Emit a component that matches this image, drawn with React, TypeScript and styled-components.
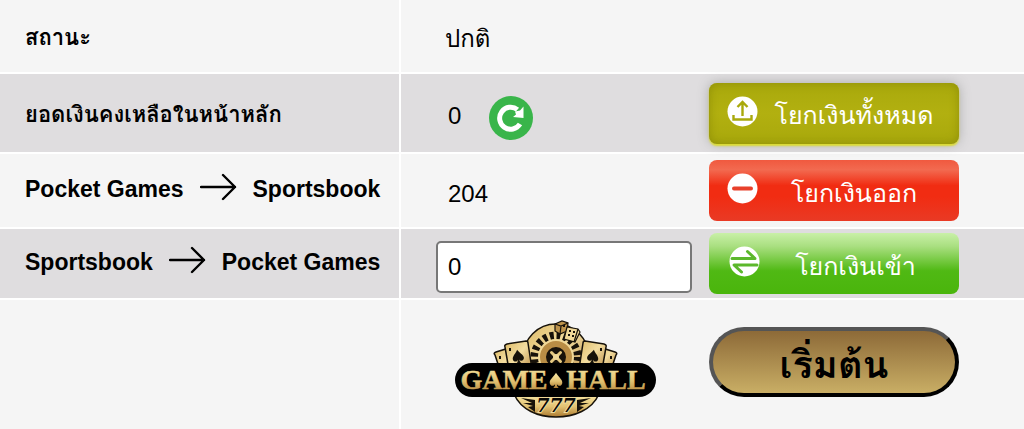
import React, { useState } from "react";
import styled, { createGlobalStyle, css } from "styled-components";

const thai = `"Thonburi", "Loma", "Noto Sans Thai Looped", "Waree", "Garuda", "Noto Sans Thai"`;

const GlobalStyle = createGlobalStyle`
  body {
    margin: 0;
    background: #f5f5f5;
    color: #000;
    font-family: "Liberation Sans", ${thai}, "Noto Sans", sans-serif;
  }
`;

const TransferTable = styled.table`
  width: 100%;
  table-layout: fixed;
  border-collapse: collapse;
`;

const Row = styled.tr<{ $height: number; $shaded?: boolean }>`
  height: ${(p) => p.$height}px;
  background: ${(p) => (p.$shaded ? "#dfdddf" : "#f5f5f5")};
  border-bottom: 2px solid #fff;
  &:last-child {
    border-bottom: 0;
  }
`;

const Label = styled.th`
  width: 400px;
  box-sizing: border-box;
  padding: 4px 0 0 25px;
  border-right: 2px solid #fff;
  text-align: left;
  font-size: 22px;
  line-height: 32px;
  white-space: nowrap;
`;

const Cell = styled.td`
  padding: 0 0 0 35px;
`;

const Line = styled.div`
  display: flex;
  align-items: center;
  gap: 17px;
`;

const Direction = styled.span`
  display: flex;
  align-items: center;
  gap: 16px;
  padding-bottom: 8px;
  font-size: 23px;

  svg {
    margin-bottom: 4px;
  }
`;

const Value = styled.span<{ $inset?: number }>`
  box-sizing: border-box;
  flex: 0 1 256px;
  display: flex;
  align-items: center;
  gap: 28px;
  padding-top: 6px;
  padding-left: ${(p) => p.$inset ?? 12}px;
  font-size: 24px;
  line-height: 32px;
`;

const StartLine = styled(Line)`
  padding-bottom: 6px;
`;

const LogoBox = styled(Value)`
  padding-top: 16px;
  padding-left: 18px;
`;

const AmountInput = styled.input`
  box-sizing: border-box;
  flex: 0 1 256px;
  min-width: 0;
  height: 52px;
  margin: 6px 0 0;
  padding: 0 10px;
  border: 2px solid #777;
  border-radius: 5px;
  background: #fff;
  color: #000;
  font: 24px/32px "Liberation Sans", sans-serif;
`;

const RefreshButton = styled.button`
  display: block;
  width: 44px;
  height: 44px;
  margin: 4px 0 0;
  padding: 0;
  border: 0;
  border-radius: 50%;
  background: #39b54a;
  cursor: pointer;
`;

const tones = {
  all: css`
    background: linear-gradient(#a9a90c, #b2b010 50%, #a8a80c);
    box-shadow: 0 2px 2px #dcdc32, 0 0 12px #aaa, inset 0 0 10px #8f8f08;
  `,
  out: css`
    background: linear-gradient(#f0593f, #f26a50 16%, #f12c12 42%, #f12c12 60%, #e93a25);
  `,
  in: css`
    background: linear-gradient(#c9f0a8, #a9df80 22%, #50b914 62%, #4ab50c);
  `,
};

const ActionButton = styled.button<{ $tone: keyof typeof tones }>`
  box-sizing: border-box;
  flex: 0 0 250px;
  display: flex;
  align-items: center;
  height: 61px;
  padding: 0 9px 0 18px;
  border: 0;
  border-radius: 8px;
  color: #fff;
  font: 25px/40px "Liberation Sans", ${thai}, sans-serif;
  white-space: nowrap;
  cursor: pointer;
  ${(p) => tones[p.$tone]}

  svg {
    flex: none;
    margin-bottom: 4px;
  }
`;

const ActionText = styled.span`
  flex: 1;
  padding-top: 4px;
  text-align: center;
`;

const StartButton = styled.button`
  box-sizing: border-box;
  flex: 0 0 250px;
  height: 70px;
  padding: 6px 0 0;
  border: 4px solid #000;
  border-color: #555 #000 #000 #555;
  border-radius: 35px;
  background: linear-gradient(#8d6a38, #c9ae65);
  color: #000;
  font: bold 38px/48px "Liberation Sans", ${thai}, sans-serif;
  cursor: pointer;
`;

const ArrowIcon = () => (
  <svg width="37" height="28" viewBox="0 0 37 28" fill="none" stroke="#000" strokeWidth="2.400" strokeLinecap="round" strokeLinejoin="round" aria-hidden="true">
    <path d="M1 14H35M23 2L35 14L23 26" />
  </svg>
);

const RefreshIcon = () => (
  <svg width="44" height="44" viewBox="0 0 44 44" aria-hidden="true">
    <path d="M31 28A11 11 0 1 1 28.500 13.600" fill="none" stroke="#fff" strokeWidth="5" />
    <path d="M34.500 10.500L34.500 22L24 21L27 18.500L26 15.500L31 14.500Z" fill="#fff" />
  </svg>
);

const UploadIcon = () => (
  <svg width="31" height="31" viewBox="0 0 31 31" aria-hidden="true">
    <circle cx="15.500" cy="15.500" r="15" fill="#fff" />
    <path d="M15.500 20V6M10.500 11L15.500 6L20.500 11M6.500 19V23.500H24.500V19" fill="none" stroke="#a9a90c" strokeWidth="2.400" />
  </svg>
);

const MinusIcon = () => (
  <svg width="31" height="31" viewBox="0 0 31 31" aria-hidden="true">
    <circle cx="15.500" cy="15.500" r="15" fill="#fff" />
    <path d="M7 15.500H24" stroke="#e8402b" strokeWidth="4" strokeLinecap="round" />
  </svg>
);

const SwapIcon = () => (
  <svg width="34" height="31" viewBox="0 0 34 31" aria-hidden="true">
    <circle cx="17.500" cy="15.500" r="15" fill="#fff" />
    <path d="M5 12.500H28L20.500 5.500M30 19H7L14.500 26" fill="none" stroke="#5cb82c" strokeWidth="3" strokeLinecap="round" strokeLinejoin="round" />
  </svg>
);

const SPADE = "M0 -8C-2 -4 -7 -1 -7 3C-7 7 -2 7.500 -1 4.500C-1 7 -2 8 -3 9H3C2 8 1 7 1 4.500C2 7.500 7 7 7 3C7 -1 2 -4 0 -8Z";

const GameHallLogo = () => (
  <svg width="203" height="100" viewBox="0 0 203 100" role="img" aria-label="Game Hall 777">
    <defs>
      <linearGradient id="gold" x1="0" y1="0" x2="0" y2="1">
        <stop offset="0" stopColor="#fae9a8" />
        <stop offset="0.550" stopColor="#e2c272" />
        <stop offset="1" stopColor="#ab7930" />
      </linearGradient>
      <linearGradient id="card" x1="0" y1="0" x2="1" y2="1">
        <stop offset="0" stopColor="#dcb965" />
        <stop offset="0.450" stopColor="#f3dda0" />
        <stop offset="1" stopColor="#a97730" />
      </linearGradient>
    </defs>
    {/* roulette wheel */}
    <circle cx="102" cy="37" r="33" fill="url(#card)" stroke="#17120a" strokeWidth="1.500" />
    <circle cx="102" cy="37" r="21.500" fill="none" stroke="#17120a" strokeWidth="8" strokeDasharray="3.900 2.850" />
    <circle cx="102" cy="37" r="18" fill="#f0d898" />
    <circle cx="102" cy="37" r="13" fill="#17120a" stroke="#b98d45" strokeWidth="6" />
    <path d="M97.500 32.500L106.500 41.500M106.500 32.500L97.500 41.500" stroke="#e5c980" strokeWidth="3" strokeLinecap="round" />
    <circle cx="102" cy="37" r="3" fill="#f0d898" />
    {/* cards */}
    <g stroke="#17120a" strokeWidth="1.500" fill="url(#card)">
      <path d="M41 35Q39 33 42 32L55 28L65 56H48Z" />
      <path d="M51 27Q50 25 53 24L72 21Q74 21 74 23L79 56H56Z" />
      <path d="M162 35Q164 33 161 32L148 28L138 56H155Z" />
      <path d="M152 27Q153 25 150 24L131 21Q129 21 129 23L124 56H147Z" />
    </g>
    <g fill="#17120a">
      <path d={SPADE} transform="translate(64 36) rotate(-8)scale(.8)" />
      <path d={SPADE} transform="translate(139 36) rotate(8)scale(.8)" />
      <path d="M55 28h2v3h-2zM45 36h2v3h-2zM146 28h2v3h-2zM156 36h2v3h-2z" />
    </g>
    {/* dice */}
    <g stroke="#17120a" strokeWidth="1.200">
      <path d="M101 4L108 1L114 3L113 11L106 14L101 11Z" fill="#bd934b" />
      <path d="M101 4L107 6L114 3M107 6L106 14" fill="none" />
      <path d="M113 7L124 9L126 12L121 22L110 19Z" fill="#f0d898" />
      <path d="M124 9L120 22" fill="none" />
    </g>
    <path d="M115 10h2v2h-2zM119 11h2v2h-2zM114 14h2v2h-2zM118 15h2v2h-2zM109 5h2v2h-2z" fill="#17120a" />
    {/* lower medallion */}
    <path d="M60 74H145C138 90 120 97 102 97S67 90 60 74Z" fill="url(#gold)" stroke="#17120a" strokeWidth="1.500" />
    <path d="M67 78L81 80L81 92L74 87L79 86L69 83L78 83ZM137 78L123 80L123 92L130 87L125 86L135 83L126 83Z" fill="#17120a" />
    <text x="102" y="92" textAnchor="middle" fill="#080705" stroke="#f0d898" strokeWidth="2" paintOrder="stroke" fontFamily="DejaVu Serif, serif" fontWeight="bold" fontStyle="italic" fontSize="19">777</text>
    {/* name plate */}
    <rect x="1" y="43" width="201" height="34" rx="17" fill="#000" />
    <g fill="url(#gold)" stroke="url(#gold)" strokeWidth="0.500" fontFamily="Liberation Serif, serif" fontWeight="bold" fontSize="28">
      <text x="50" y="69" textAnchor="middle">GAME</text>
      <text x="152" y="69" textAnchor="middle">HALL</text>
    </g>
    <path d={SPADE} transform="translate(102 60)scale(.9)" fill="url(#gold)" />
  </svg>
);

export default function App() {
  const [amount, setAmount] = useState("0");
  return (
    <>
      <GlobalStyle />
      <TransferTable>
        <tbody>
          <Row $height={73}>
            <Label scope="row">สถานะ</Label>
            <Cell>
              <Value $inset={9}>ปกติ</Value>
            </Cell>
          </Row>
          <Row $height={80} $shaded>
            <Label scope="row">ยอดเงินคงเหลือในหน้าหลัก</Label>
            <Cell>
              <Line>
                <Value>
                  0
                  <RefreshButton type="button" aria-label="รีเฟรช">
                    <RefreshIcon />
                  </RefreshButton>
                </Value>
                <ActionButton type="button" $tone="all">
                  <UploadIcon />
                  <ActionText>โยกเงินทั้งหมด</ActionText>
                </ActionButton>
              </Line>
            </Cell>
          </Row>
          <Row $height={75}>
            <Label scope="row">
              <Direction>
                Pocket Games
                <ArrowIcon />
                Sportsbook
              </Direction>
            </Label>
            <Cell>
              <Line>
                <Value>204</Value>
                <ActionButton type="button" $tone="out">
                  <MinusIcon />
                  <ActionText>โยกเงินออก</ActionText>
                </ActionButton>
              </Line>
            </Cell>
          </Row>
          <Row $height={71} $shaded>
            <Label scope="row">
              <Direction as="label" htmlFor="amount">
                Sportsbook
                <ArrowIcon />
                Pocket Games
              </Direction>
            </Label>
            <Cell>
              <Line>
                <AmountInput id="amount" inputMode="numeric" value={amount} onChange={(e) => setAmount(e.target.value)} />
                <ActionButton type="button" $tone="in">
                  <SwapIcon />
                  <ActionText>โยกเงินเข้า</ActionText>
                </ActionButton>
              </Line>
            </Cell>
          </Row>
          <Row $height={130}>
            <Label as="td" />
            <Cell>
              <StartLine>
                <LogoBox>
                  <GameHallLogo />
                </LogoBox>
                <StartButton type="button">เริ่มต้น</StartButton>
              </StartLine>
            </Cell>
          </Row>
        </tbody>
      </TransferTable>
    </>
  );
}
